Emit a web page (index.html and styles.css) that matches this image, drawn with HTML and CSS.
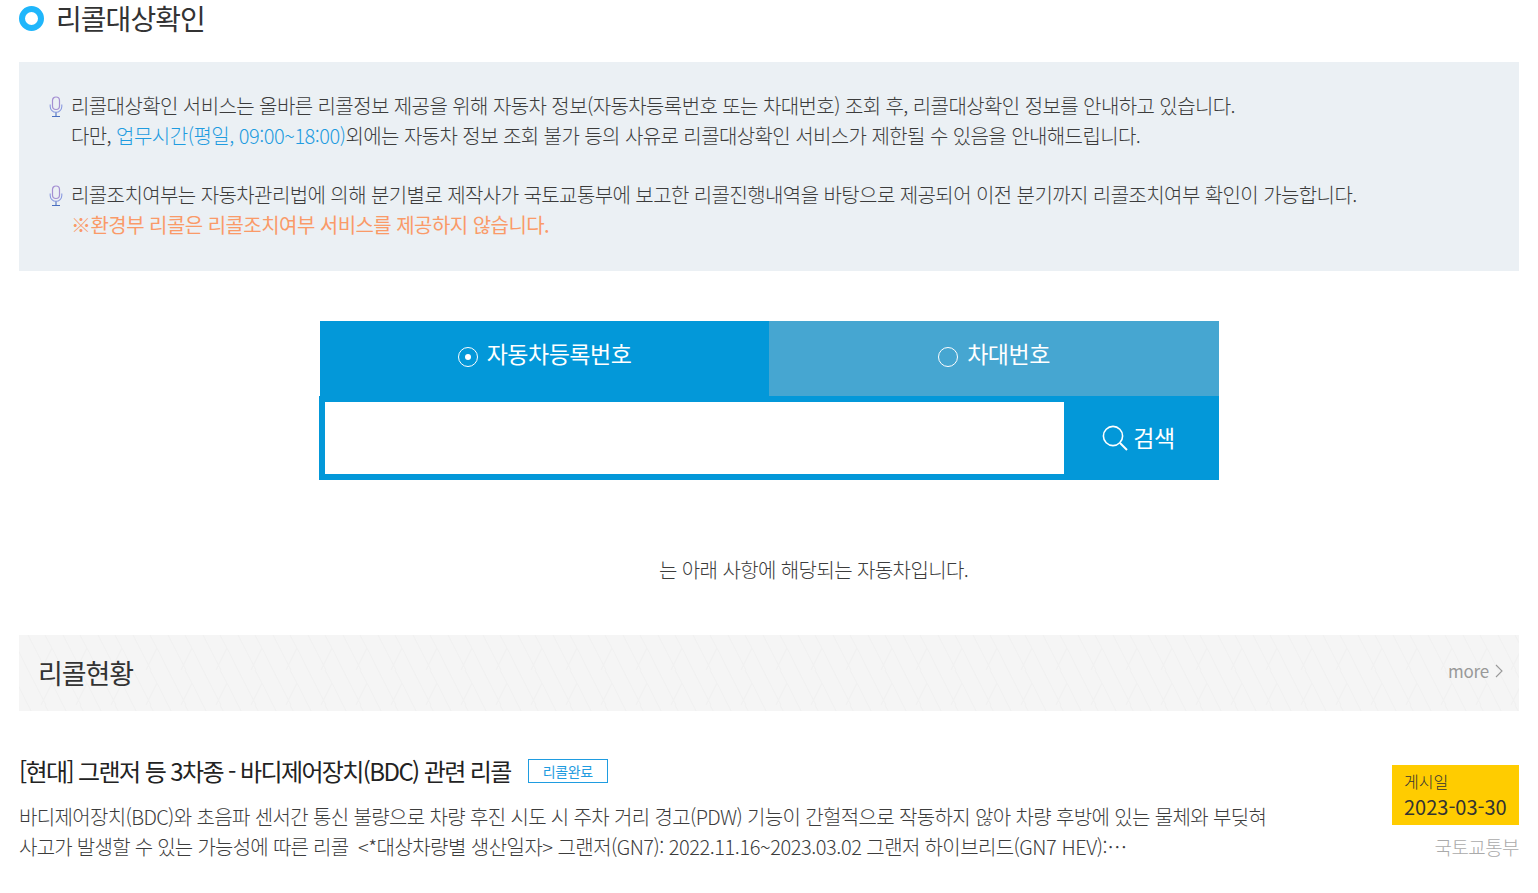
FILE: index.html
```html
<!DOCTYPE html>
<html lang="ko">
<head>
<meta charset="utf-8">
<title>리콜대상확인</title>
<link rel="stylesheet" href="styles.css">
</head>
<body>
<main class="page">
  <h1 class="title"><span class="title-mark"></span>리콜대상확인</h1>
  <section class="notice">
    <div class="notice-item">
      <svg class="mic" viewBox="0 0 14 22" width="14" height="22"><rect x="3.5" y="1" width="7" height="12.5" rx="3.5" fill="none" stroke="#a48fd2" stroke-width="1.2"/><path d="M1.2 8.5v2a5.8 5.8 0 0 0 11.6 0v-2" fill="none" stroke="#8a9ae0" stroke-width="1.1"/><path d="M7 16.5v3.5M3 20.5h8" fill="none" stroke="#4a6fc0" stroke-width="1.1"/></svg>
      <p>리콜대상확인 서비스는 올바른 리콜정보 제공을 위해 자동차 정보(자동차등록번호 또는 차대번호) 조회 후, 리콜대상확인 정보를 안내하고 있습니다.<br>다만, <span class="blue">업무시간(평일, 09:00~18:00)</span>외에는 자동차 정보 조회 불가 등의 사유로 리콜대상확인 서비스가 제한될 수 있음을 안내해드립니다.</p>
    </div>
    <div class="notice-item">
      <svg class="mic" viewBox="0 0 14 22" width="14" height="22"><rect x="3.5" y="1" width="7" height="12.5" rx="3.5" fill="none" stroke="#a48fd2" stroke-width="1.2"/><path d="M1.2 8.5v2a5.8 5.8 0 0 0 11.6 0v-2" fill="none" stroke="#8a9ae0" stroke-width="1.1"/><path d="M7 16.5v3.5M3 20.5h8" fill="none" stroke="#4a6fc0" stroke-width="1.1"/></svg>
      <p>리콜조치여부는 자동차관리법에 의해 분기별로 제작사가 국토교통부에 보고한 리콜진행내역을 바탕으로 제공되어 이전 분기까지 리콜조치여부 확인이 가능합니다.<br><span class="orange">※환경부 리콜은 리콜조치여부 서비스를 제공하지 않습니다.</span></p>
    </div>
  </section>
  <section class="search">
    <div class="tabs">
      <div class="tab tab-on"><span class="radio radio-on"></span>자동차등록번호</div>
      <div class="tab tab-off"><span class="radio"></span>차대번호</div>
    </div>
    <div class="search-box">
      <input class="search-input" type="text" aria-label="검색어">
      <div class="search-btn">
        <svg viewBox="0 0 26 26" width="26" height="26"><circle cx="11" cy="11" r="9.6" fill="none" stroke="#fff" stroke-width="1.6"/><path d="M18 18l7 7" stroke="#fff" stroke-width="2" fill="none"/></svg>
        <span>검색</span>
      </div>
    </div>
  </section>
  <p class="result-msg">는 아래 사항에 해당되는 자동차입니다.</p>
  <header class="status-head">
    <h2>리콜현황</h2>
    <span class="more">more <svg viewBox="0 0 8 14" width="8" height="14"><path d="M1 1l6 6-6 6" fill="none" stroke="#999" stroke-width="1.1"/></svg></span>
  </header>
  <article class="recall">
    <div class="recall-main">
      <h3>[현대] 그랜저 등 3차종 - 바디제어장치(BDC) 관련 리콜<span class="badge">리콜완료</span></h3>
      <p>바디제어장치(BDC)와 초음파 센서간 통신 불량으로 차량 후진 시도 시 주차 거리 경고(PDW) 기능이 간헐적으로 작동하지 않아 차량 후방에 있는 물체와 부딪혀<br><span class="tight">사고가 발생할 수 있는 가능성에 따른 리콜 &nbsp;</span><span class="mid">&lt;*대상차량별 생산일자&gt; 그랜저(GN7): </span><span class="num">2022.11.16~2023.03.02</span> 그랜저 하이브리드<span class="num">(GN7 HEV):…</span></p>
    </div>
    <div class="recall-side">
      <div class="date"><span>게시일</span><strong>2023-03-30</strong></div>
      <div class="org">국토교통부</div>
    </div>
  </article>
</main>
</body>
</html>
```
FILE: styles.css
```css
* { box-sizing: border-box; }
html, body { margin: 0; padding: 0; background: #fff; overflow: hidden; }
body { font-family: "Noto Sans CJK KR", "Noto Sans", sans-serif; color: #333; font-weight: 300; }
.page { width: 1519px; height: 893px; padding-left: 19px; }
h1, h2, h3, p { margin: 0; font-weight: inherit; }
.title { display: flex; align-items: center; height: 37px; font-size: 28px; font-weight: 400; color: #333; letter-spacing: -0.95px; padding-bottom: 2px; }
.title-mark { width: 25px; height: 25px; border: 6px solid #1fb6fb; border-radius: 50%; margin: 2px 12px 0 0; }
.notice { margin-top: 25px; height: 209px; background: #ebf0f4; padding: 29px 0 0 30px; }
.notice-item { display: flex; gap: 8px; margin-bottom: 29px; }
.mic { flex: none; margin-top: 5px; }
.notice-item p { font-size: 20px; line-height: 30px; letter-spacing: -0.59px; color: #3c3c3c; }
.blue { color: #1f9ce0; letter-spacing: -0.5px; }
.orange { color: #fa9a68; font-weight: 400; letter-spacing: -0.55px; }
.search { width: 900px; margin: 50px 0 0 300px; }
.tabs { display: flex; padding-left: 1px; height: 75px; }
.tab { display: flex; align-items: center; justify-content: center; color: #fff; font-size: 23px; font-weight: 400; letter-spacing: -0.5px; padding-bottom: 12px; }
.tab-on { background: #0398d9; width: 449px; }
.tab-off { background: #46a6d1; width: 450px; }
.radio { width: 20px; height: 20px; border: 1px solid #fff; border-radius: 50%; margin: 9px 9px 0 0; position: relative; }
.radio-on::after { content: ""; position: absolute; left: 6px; top: 6px; width: 6px; height: 6px; background: #fff; border-radius: 50%; }
.search-box { display: flex; height: 84px; border: 6px solid #0398d9; background: #0398d9; }
.search-input { width: 739px; height: 72px; border: 0; background: #fff; padding: 0 10px; outline: none; }
.search-btn { flex: 1; display: flex; align-items: center; justify-content: center; gap: 5px; color: #fff; font-size: 23px; font-weight: 400; letter-spacing: -0.5px; }
.search-btn span { margin-top: -2px; }
.result-msg { margin-top: 73px; margin-left: 640px; font-size: 20px; line-height: 34px; letter-spacing: -0.6px; color: #3c3c3c; height: 34px; }
.status-head { margin-top: 48px; height: 76px; display: flex; align-items: center; justify-content: space-between; padding: 0 16px 0 19px; background-color: #f5f5f5;
  background-image: url("data:image/svg+xml,%3Csvg xmlns='http://www.w3.org/2000/svg' width='35' height='35'%3E%3Cpath d='M22 35L33 13M9 0L27 35M-6 5L9 35M26 0L35 17' fill='none' stroke='%23f1f1f1' stroke-width='1.2'/%3E%3C/svg%3E"); }
.status-head h2 { font-size: 27px; font-weight: 400; letter-spacing: -1.1px; color: #333; padding-bottom: 2px; }
.more { font-size: 17px; letter-spacing: -0.2px; color: #999; font-weight: 400; display: flex; align-items: center; gap: 6px; padding-bottom: 5px; }
.recall { display: flex; justify-content: space-between; margin-top: 41px; }
.recall-main { width: 1280px; }
.recall h3 { display: flex; align-items: center; height: 36px; font-size: 24px; font-weight: 400; letter-spacing: -1.6px; color: #222; }
.badge { display: inline-flex; align-items: center; justify-content: center; width: 80px; height: 24px; margin: 2px 0 0 17px; border: 1px solid #1f9ce0; color: #1f9ce0; font-size: 14px; font-weight: 400; letter-spacing: -0.3px; }
.recall-main p { margin-top: 14px; font-size: 20px; line-height: 30px; letter-spacing: -0.64px; color: #3c3c3c; white-space: nowrap; }
.tight { letter-spacing: -0.74px; }
.mid { letter-spacing: -0.55px; }
.num { letter-spacing: -0.44px; }
.recall-side { width: 127px; margin-top: 13px; }
.date { height: 60px; background: #ffcc00; padding: 4px 0 0 12px; display: flex; flex-direction: column; color: #333; }
.date span { font-size: 16px; line-height: 24px; font-weight: 300; }
.date strong { font-size: 20px; line-height: 28px; font-weight: 400; }
.org { margin-top: 8px; text-align: right; font-size: 19px; line-height: 28px; color: #aaa; letter-spacing: -0.6px; }
```
